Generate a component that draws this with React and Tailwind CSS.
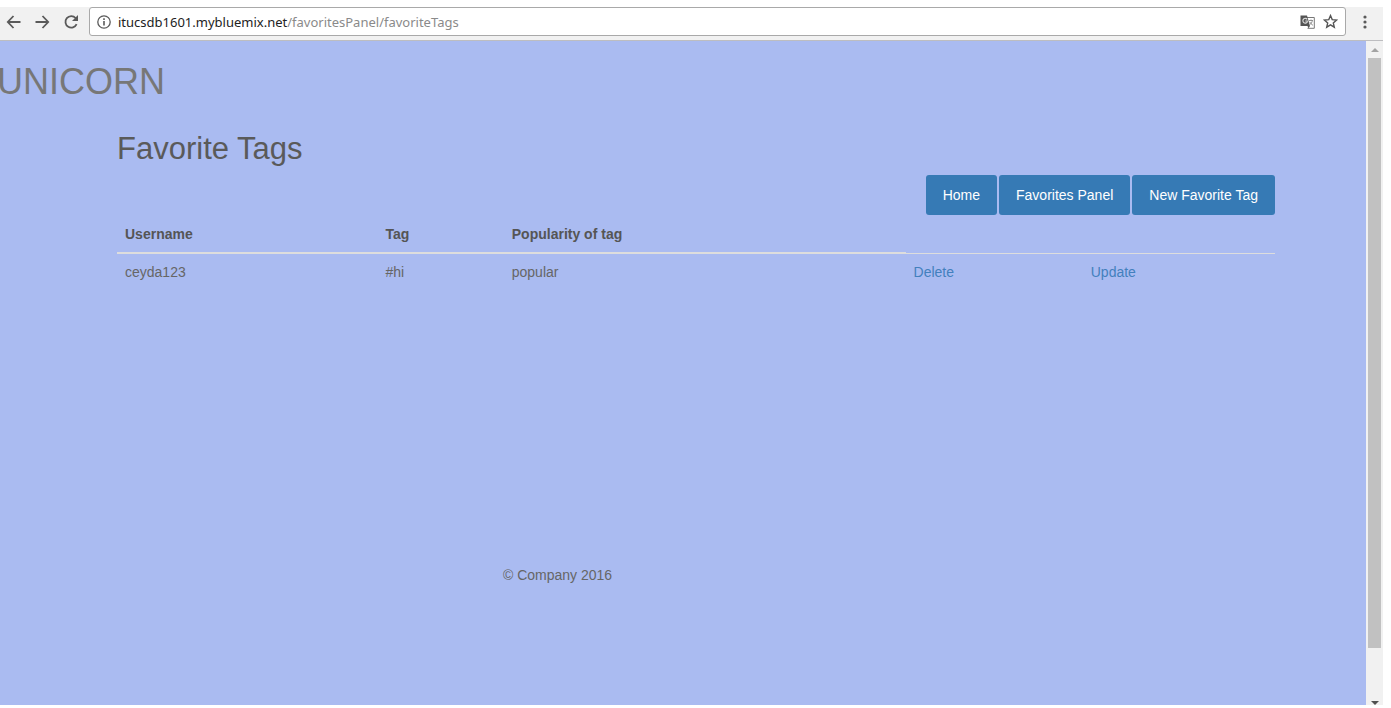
const buttonClass =
  "flex h-10 items-center rounded-[3px] bg-[#367ab5] px-[17px] text-sm text-white";

function IconButton({ label, children }) {
  return (
    <button type="button" aria-label={label} className="flex shrink-0 items-center justify-center">
      {children}
    </button>
  );
}

function Toolbar() {
  return (
    <header className="flex h-[34px] shrink-0 items-start border-b border-[#bdbdc0] bg-[#f1f1f1]">
      <nav className="flex h-[30px] items-center gap-[13px] pl-[6px]">
        <IconButton label="Back">
          <svg width="16" height="16" viewBox="0 0 16 16" fill="none" stroke="#5a5a5a" strokeWidth="1.8">
            <path d="M14.5 8H2.5M7.5 2L1.8 8L7.5 14" />
          </svg>
        </IconButton>
        <IconButton label="Forward">
          <svg width="16" height="16" viewBox="0 0 16 16" fill="none" stroke="#5a5a5a" strokeWidth="1.8">
            <path d="M0.5 8H12.5M7.5 2L13.2 8L7.5 14" />
          </svg>
        </IconButton>
        <IconButton label="Reload">
          <svg width="16" height="16" viewBox="0 0 16 16" fill="none" stroke="#5a5a5a" strokeWidth="1.8">
            <path d="M12.6 10.2A5.8 5.8 0 1 1 11.6 4L13 5.4" />
            <path d="M14 1V7H8Z" fill="#5a5a5a" stroke="none" />
          </svg>
        </IconButton>
      </nav>
      <div className="ml-[9px] flex h-[29px] min-w-0 flex-1 items-center rounded-[3px] border border-[#a9a9a9] bg-white pr-[7px] pl-[7px]">
        <svg width="14" height="14" viewBox="0 0 14 14" fill="none" stroke="#5a5a5a" className="shrink-0">
          <circle cx="7" cy="7" r="6.2" strokeWidth="1.3" />
          <path d="M7 6V10.5M7 3.3V5" strokeWidth="1.6" />
        </svg>
        <p className="ml-[7px] min-w-0 flex-1 truncate font-['Noto_Sans','Open_Sans',sans-serif] text-[13px] leading-5 text-[#8a8a8a]">
          <span className="text-[#222]">itucsdb1601.mybluemix.net</span>/favoritesPanel/favoriteTags
        </p>
        <div className="flex items-center gap-2">
          <IconButton label="Translate this page">
            <svg width="15" height="14" viewBox="0 0 15 14" fill="none">
              <path d="M7 2.5H14.3V13.3H7.5" fill="#fff" stroke="#777" />
              <path d="M0.5 0.5H7L10 11H0.5Z" fill="#555" />
              <path d="M7.2 4.3A2.4 2.4 0 1 0 7.3 7V6H5.3" stroke="#ddd" strokeWidth="1.1" />
              <path d="M9 5.5H13M11 4.5V5.5M12.4 5.5C12 7.5 11 9 9.5 10M9.8 7C10.5 8.5 11.5 9.5 13 10.3" stroke="#888" strokeWidth="0.9" />
              <path d="M7.5 11H10L8.5 13.3Z" fill="#555" />
            </svg>
          </IconButton>
          <IconButton label="Bookmark this page">
            <svg width="15" height="15" viewBox="0 0 15 15" fill="none" stroke="#555" strokeWidth="1.4">
              <path d="M7.5 1.6L9.2 5.6L13.6 6L10.3 8.9L11.3 13.2L7.5 10.9L3.7 13.2L4.7 8.9L1.4 6L5.8 5.6Z" />
            </svg>
          </IconButton>
        </div>
      </div>
      <div className="flex h-[30px] w-[37px] shrink-0 items-center justify-center">
        <IconButton label="Menu">
          <svg width="4" height="14" viewBox="0 0 4 14" fill="#5a5a5a">
            <circle cx="2" cy="2" r="1.6" />
            <circle cx="2" cy="7" r="1.6" />
            <circle cx="2" cy="12" r="1.6" />
          </svg>
        </IconButton>
      </div>
    </header>
  );
}

function Scrollbar() {
  return (
    <div aria-hidden="true" className="flex w-[17px] shrink-0 flex-col items-center bg-[#f1f1f1]">
      <div className="flex h-[17px] items-center">
        <svg width="8" height="4" viewBox="0 0 8 4" fill="#a3a3a3">
          <path d="M0 4L4 0L8 4Z" />
        </svg>
      </div>
      <div className="w-[13px] flex-1 bg-[#c1c1c1]" />
      <div className="flex h-[57px] items-end">
        <svg width="8" height="4" viewBox="0 0 8 4" fill="#505050">
          <path d="M0 0H8L4 4Z" />
        </svg>
      </div>
    </div>
  );
}

function TagsTable() {
  return (
    <table className="w-full table-fixed border-collapse text-left text-sm leading-5">
      <colgroup>
        <col className="w-[22.5%]" />
        <col className="w-[10.9%]" />
        <col className="w-[34.7%]" />
        <col className="w-[15.3%]" />
        <col />
      </colgroup>
      <thead>
        <tr className="font-bold text-[#555]">
          <th scope="col" className="border-b-2 border-[#ddd] p-2">Username</th>
          <th scope="col" className="border-b-2 border-[#ddd] p-2">Tag</th>
          <th scope="col" className="border-b-2 border-[#ddd] p-2">Popularity of tag</th>
        </tr>
      </thead>
      <tbody>
        <tr>
          <td className="p-2">ceyda123</td>
          <td className="p-2">#hi</td>
          <td className="p-2">popular</td>
          <td className="border-t border-[#ddd] p-2">
            <a href="#delete" className="text-[#4380bd]">Delete</a>
          </td>
          <td className="border-t border-[#ddd] p-2">
            <a href="#update" className="text-[#4380bd]">Update</a>
          </td>
        </tr>
      </tbody>
    </table>
  );
}

export default function App() {
  return (
    <div className="flex min-h-screen flex-col bg-white pt-[7px] pr-2 pb-[3px] font-['Liberation_Sans',Arial,sans-serif]">
      <Toolbar />
      <div className="flex flex-1">
        <div className="min-w-0 flex-1 overflow-hidden bg-[#aabbf1] text-[#666]">
          <h1 className="-ml-[3px] pt-[21px] text-4xl leading-10 text-[#777]">UNICORN</h1>
          <main className="pr-[91px] pl-[117px]">
            <h2 className="pt-[27px] text-[31px] leading-10 text-[#5a5a5a]">Favorite Tags</h2>
            <nav className="flex justify-end gap-[2px] pt-[6px] pb-[1px]">
              <a href="#home" className={buttonClass}>Home</a>
              <a href="#favorites" className={buttonClass}>Favorites Panel</a>
              <a href="#new" className={buttonClass}>New Favorite Tag</a>
            </nav>
            <TagsTable />
          </main>
          <footer className="pt-[275px] pl-[503px] text-sm leading-5">© Company 2016</footer>
        </div>
        <Scrollbar />
      </div>
    </div>
  );
}
